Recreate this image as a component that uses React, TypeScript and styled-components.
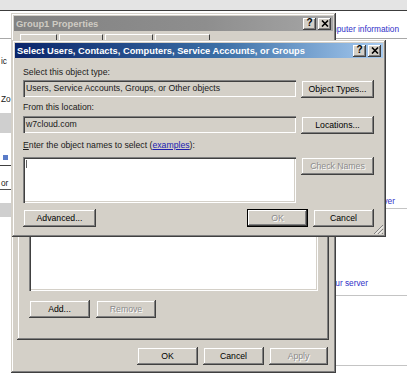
import React from 'react';
import styled, { createGlobalStyle, css } from 'styled-components';

const FACE = '#d4d0c8';

const GlobalStyle = createGlobalStyle`
  html, body {
    margin: 0;
    padding: 0;
    background: #fff;
  }
  body {
    font-family: "Liberation Sans", Arial, sans-serif;
    font-size: 8.7px;
    color: #000;
  }
`;

const raised = css`
  box-shadow: inset -1px -1px #404040, inset 1px 1px ${FACE}, inset -2px -2px #808080, inset 2px 2px #fff;
`;

const sunken = css`
  box-shadow: inset 1px 1px #808080, inset 2px 2px #404040, inset -1px -1px #fff, inset -2px -2px ${FACE};
`;

const Desktop = styled.div`
  position: relative;
  width: 407px;
  height: 379px;
  overflow: hidden;
  background: #fff;
`;

/* ---- page behind the dialogs ---- */

const Page = styled.div`
  display: flex;
  flex-direction: column;
  height: 100%;
  font-size: 8.3px;
  line-height: 11px;
`;

const TopStrip = styled.div`
  height: 10px;
  background: #e4e4e4;
  border-bottom: 1px solid #3c3c3c;
`;

const HeaderBand = styled.div`
  box-sizing: border-box;
  height: 28px;
  border-bottom: 1px solid #a8a8a8;
  display: flex;
  align-items: flex-end;
  justify-content: flex-end;
  padding: 0 8px 3px 0;
`;

const Body = styled.div`
  flex: 1;
  display: grid;
  grid-template-columns: 11px 1fr 160px;
`;

const Column = styled.div`
  display: flex;
  flex-direction: column;
  overflow: hidden;
`;

const Snip = styled.div<{ $mt: number }>`
  margin-top: ${p => p.$mt}px;
  padding-left: 1px;
  white-space: nowrap;
  color: #202020;
`;

const Block = styled.div<{ $mt: number; $h: number; $color: string; $w?: number }>`
  margin-top: ${p => p.$mt}px;
  height: ${p => p.$h}px;
  width: ${p => (p.$w ? `${p.$w}px` : 'auto')};
  margin-left: ${p => (p.$w ? '3px' : '0')};
  background: ${p => p.$color};
  flex: none;
`;

const PageLink = styled.div<{ $mt?: number; $pr: number; $pb?: number; $plain?: boolean }>`
  margin-top: ${p => p.$mt ?? 0}px;
  padding: 0 ${p => p.$pr}px ${p => p.$pb ?? 0}px 0;
  text-align: right;
  white-space: nowrap;
  color: #3030c8;
  border-bottom: ${p => (p.$plain ? '0' : '1px solid #c4c4c4')};
`;

/* ---- windows ---- */

const Window = styled.div<{ $x: number; $y: number; $w: number; $h: number }>`
  position: absolute;
  left: ${p => p.$x}px;
  top: ${p => p.$y}px;
  width: ${p => p.$w}px;
  height: ${p => p.$h}px;
  box-sizing: border-box;
  padding: 3px;
  background: ${FACE};
  ${raised};
  display: flex;
  flex-direction: column;
`;

const TitleBar = styled.div<{ $active: boolean }>`
  height: 15px;
  flex: none;
  display: flex;
  align-items: center;
  padding-left: 2px;
  background: ${p =>
    p.$active
      ? 'linear-gradient(90deg, #0a246a 0%, #3a6ea5 55%, #a6caf0 100%)'
      : 'linear-gradient(90deg, #828282 0%, #8e8e8e 60%, #a6a6a6 100%)'};
  color: ${p => (p.$active ? '#fff' : '#cfcbc3')};
`;

const TitleText = styled.span<{ $size: number }>`
  flex: 1;
  font-weight: bold;
  font-size: ${p => p.$size}px;
  white-space: nowrap;
  overflow: hidden;
`;

const TitleButtons = styled.div`
  display: flex;
  gap: 2px;
  margin-right: 2px;
`;

const TitleButton = styled.div`
  width: 13px;
  height: 12px;
  background: ${FACE};
  box-shadow: inset -1px -1px #404040, inset 1px 1px #fff, inset -2px -2px #808080;
  display: flex;
  align-items: center;
  justify-content: center;
  color: #000;
  font-weight: bold;
  font-size: 10px;
  line-height: 1;
  padding-bottom: 1px;
  box-sizing: border-box;
`;

const Button = styled.button<{ $w: number; $default?: boolean }>`
  width: ${p => p.$w}px;
  height: 18px;
  padding: 0;
  border: 0;
  background: ${FACE};
  font-family: inherit;
  font-size: 8.7px;
  color: #000;
  ${raised};
  ${p =>
    p.$default &&
    css`
      box-shadow: inset 0 0 0 1px #000, inset -2px -2px #404040, inset 2px 2px #fff, inset -3px -3px #808080;
    `}
  &:disabled {
    color: #8c8c8c;
    text-shadow: 1px 1px #fff;
  }
`;

/* ---- select users dialog ---- */

const Content = styled.div`
  display: flex;
  flex-direction: column;
  padding: 9px 9px 7px 8px;
  position: relative;
  flex: 1;
`;

const Label = styled.div<{ $mt?: number; $mb: number }>`
  margin-top: ${p => p.$mt ?? 0}px;
  margin-bottom: ${p => p.$mb}px;
  line-height: 11px;
  color: #1a1a1a;
  white-space: nowrap;
`;

const Row = styled.div`
  display: grid;
  grid-template-columns: 1fr 73px;
  column-gap: 5px;
  align-items: start;
`;

const Field = styled.div`
  height: 17px;
  line-height: 17px;
  padding: 0 3px;
  background: ${FACE};
  ${sunken};
  white-space: nowrap;
  overflow: hidden;
  color: #1a1a1a;
`;

const NamesBox = styled.div`
  height: 46px;
  background: #fff;
  ${sunken};
  padding: 3px 0 0 3px;
  box-sizing: border-box;
`;

const Caret = styled.span`
  display: block;
  width: 1px;
  height: 8px;
  background: #606060;
`;

const Underlined = styled.span`
  text-decoration: underline;
`;

const Link = styled.span`
  color: #2020b0;
  text-decoration: underline;
`;

const Footer = styled.div<{ $mt: number }>`
  margin-top: ${p => p.$mt}px;
  display: flex;
  justify-content: space-between;
`;

const ButtonGroup = styled.div`
  display: flex;
  gap: 5px;
`;

const Grip = styled.svg`
  position: absolute;
  right: -1px;
  bottom: -1px;
`;

/* ---- group properties dialog ---- */

const Tabs = styled.div`
  margin-top: 3px;
  height: 18px;
  flex: none;
  display: flex;
  gap: 2px;
  padding-left: 6px;
`;

const Tab = styled.div<{ $w: number }>`
  width: ${p => p.$w}px;
  box-sizing: border-box;
  border-top: 1px solid #fff;
  border-left: 1px solid #fff;
  border-right: 1px solid #404040;
`;

const Panel = styled.div`
  flex: 1;
  margin: 0 4px 0 3px;
  padding: 40px 11px 22px 12px;
  display: flex;
  flex-direction: column;
  ${raised};
`;

const ListBox = styled.div`
  flex: 1;
  background: #fff;
  ${sunken};
`;

const PanelButtons = styled.div`
  margin-top: 9px;
  display: flex;
  gap: 6px;
`;

const BackFooter = styled.div`
  margin: 7px 5px 5px 0;
  display: flex;
  justify-content: flex-end;
  gap: 5px;
`;

const CloseIcon = () => (
  <svg width="8" height="7" viewBox="0 0 8 7">
    <path d="M1 0.5 L7 6.5 M7 0.5 L1 6.5" stroke="#000" strokeWidth="1.6" />
  </svg>
);

const TitleControls = () => (
  <TitleButtons>
    <TitleButton>?</TitleButton>
    <TitleButton>
      <CloseIcon />
    </TitleButton>
  </TitleButtons>
);

const tabWidths = [37, 44, 48, 55];

export default function App() {
  return (
    <>
      <GlobalStyle />
      <Desktop>
        <Page>
          <TopStrip />
          <HeaderBand>
            <PageLink $pr={0} $plain>
              Computer information
            </PageLink>
          </HeaderBand>
          <Body>
            <Column>
              <Snip $mt={17}>ic</Snip>
              <Snip $mt={27}>Zo</Snip>
              <Block $mt={8} $h={20} $color="#cfcfcf" />
              <Block $mt={22} $h={5} $w={5} $color="#5a7cc8" />
              <Block $mt={5} $h={1} $color="#404040" />
              <Snip $mt={12}>or</Snip>
              <Block $mt={0} $h={1} $color="#505050" />
              <Block $mt={13} $h={14} $color="#cfcfcf" />
            </Column>
            <div />
            <Column>
              <PageLink $mt={157} $pr={12} $pb={1}>
                Manage this server
              </PageLink>
              <PageLink $mt={69} $pr={39} $pb={6}>
                Configure your server
              </PageLink>
              <Block $mt={69} $h={1} $color="#c4c4c4" />
            </Column>
          </Body>
        </Page>

        <Window $x={11} $y={13} $w={325} $h={360}>
          <TitleBar $active={false}>
            <TitleText $size={9.4}>Group1 Properties</TitleText>
            <TitleControls />
          </TitleBar>
          <Tabs>
            {tabWidths.map(w => (
              <Tab key={w} $w={w} />
            ))}
          </Tabs>
          <Panel>
            <ListBox />
            <PanelButtons>
              <Button $w={61}>Add...</Button>
              <Button $w={60} disabled>
                Remove
              </Button>
            </PanelButtons>
          </Panel>
          <BackFooter>
            <Button $w={61}>OK</Button>
            <Button $w={61}>Cancel</Button>
            <Button $w={59} disabled>
              Apply
            </Button>
          </BackFooter>
        </Window>

        <Window $x={12} $y={40} $w={374} $h={197}>
          <TitleBar $active>
            <TitleText $size={9.3}>Select Users, Contacts, Computers, Service Accounts, or Groups</TitleText>
            <TitleControls />
          </TitleBar>
          <Content>
            <Label $mb={2}>Select this object type:</Label>
            <Row>
              <Field>Users, Service Accounts, Groups, or Other objects</Field>
              <Button $w={73}>Object Types...</Button>
            </Row>
            <Label $mt={4} $mb={3}>
              From this location:
            </Label>
            <Row>
              <Field>w7cloud.com</Field>
              <Button $w={73}>Locations...</Button>
            </Row>
            <Label $mt={6} $mb={6}>
              <Underlined>E</Underlined>nter the object names to select (<Link>examples</Link>):
            </Label>
            <Row>
              <NamesBox>
                <Caret />
              </NamesBox>
              <Button $w={73} disabled>
                Check Names
              </Button>
            </Row>
            <Footer $mt={6}>
              <Button $w={73}>Advanced...</Button>
              <ButtonGroup>
                <Button $w={61} $default disabled>
                  OK
                </Button>
                <Button $w={61}>Cancel</Button>
              </ButtonGroup>
            </Footer>
            <Grip width="11" height="11" viewBox="0 0 11 11">
              <path d="M10 1 L1 10 M10 5 L5 10 M10 9 L9 10" stroke="#808080" strokeWidth="1" />
              <path d="M10 2.5 L2.5 10 M10 6.5 L6.5 10" stroke="#fff" strokeWidth="1" />
            </Grip>
          </Content>
        </Window>
      </Desktop>
    </>
  );
}
